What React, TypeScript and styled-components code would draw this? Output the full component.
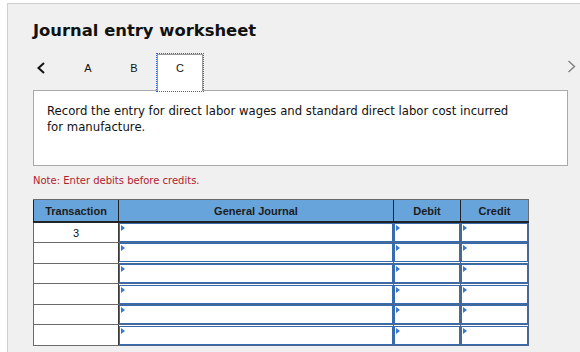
import React from 'react';
import styled, { createGlobalStyle } from 'styled-components';

const GlobalStyle = createGlobalStyle`
  html, body {
    margin: 0;
    padding: 0;
    background: #ffffff;
  }
  body {
    font-family: "DejaVu Sans", Verdana, sans-serif;
    overflow: hidden;
  }
`;

const Frame = styled.div`
  margin: 3px 0 0 7px;
  width: 573px;
  height: 349px;
  box-sizing: border-box;
  background: #f0f0f0;
  border-top: 1px solid #cfcfcf;
  border-left: 1px solid #cfcfcf;
  padding: 17px 0 0 25px;
  overflow: hidden;
`;

const Title = styled.h1`
  margin: 0;
  font-size: 16.4px;
  line-height: 20px;
  font-weight: bold;
  color: #111111;
`;

const TabRow = styled.div`
  display: flex;
  align-items: flex-start;
  width: 543px;
  height: 37px;
  margin-top: 13px;
  position: relative;
  z-index: 1;
  margin-bottom: -1px;
`;

const NavButton = styled.div<{ side: 'left' | 'right' }>`
  display: flex;
  width: ${p => (p.side === 'left' ? '32px' : 'auto')};
  margin-left: ${p => (p.side === 'right' ? 'auto' : '0')};
  padding-top: ${p => (p.side === 'left' ? '8px' : '6px')};
  padding-left: ${p => (p.side === 'left' ? '3px' : '0')};
  box-sizing: border-box;
`;

const Tab = styled.div<{ active?: boolean }>`
  width: 46px;
  height: 37px;
  box-sizing: border-box;
  text-align: center;
  font-family: "Liberation Sans", Arial, sans-serif;
  font-size: 11px;
  line-height: 13px;
  padding-top: 7px;
  color: #111111;
  background: ${p => (p.active ? '#ffffff' : 'transparent')};
  border: 1px solid ${p => (p.active ? '#9a9a9a' : 'transparent')};
  border-bottom: none;
  outline: ${p => (p.active ? '1px dotted #2a62c8' : 'none')};
`;

const Prompt = styled.div`
  width: 535px;
  height: 76px;
  box-sizing: border-box;
  background: #ffffff;
  border: 1px solid #a9a9a9;
  padding: 12px 40px 0 13px;
  font-size: 11.7px;
  line-height: 16px;
  color: #111111;
`;

const Note = styled.div`
  margin-top: 8px;
  font-size: 10px;
  line-height: 14px;
  color: #b3222c;
`;

const Table = styled.table`
  margin-top: 11px;
  border-collapse: collapse;
  width: 495px;
  table-layout: fixed;
  background: #ffffff;
  font-family: "Liberation Sans", Arial, sans-serif;
  font-size: 11px;
  border: 1px solid #6a6a6a;
`;

const HeadCell = styled.th<{ w: number }>`
  width: ${p => p.w}px;
  height: 21px;
  padding: 0;
  background: #68a4dc;
  color: #1c1c1c;
  font-weight: bold;
  text-align: center;
  border-left: 1px solid #222222;
  border-bottom: 2px solid #222222;
  border-top: 1px solid #6a6a6a;
`;

const Row = styled.tr`
  height: 20.6px;
`;

const TxCell = styled.td`
  padding: 0;
  text-align: center;
  color: #111111;
  border: 1px solid #6a6a6a;
  border-right: 1px solid #3a3a3a;
`;

const EntryCell = styled.td`
  padding: 0;
  border: 1px solid #4a6790;
`;

const Entry = styled.div`
  position: relative;
  height: 17px;
  border: 1px solid #386cb2;
  background: #ffffff;

  &::before {
    content: '';
    position: absolute;
    left: 1px;
    top: 1px;
    border-top: 3px solid transparent;
    border-bottom: 3px solid transparent;
    border-left: 4px solid #3a78c8;
  }
`;

const rows = ['3', '', '', '', '', ''];

export default function App() {
  return (
    <>
      <GlobalStyle />
      <Frame>
        <Title>Journal entry worksheet</Title>
        <TabRow>
          <NavButton side="left">
            <svg width="10" height="12" viewBox="0 0 10 12">
              <polyline points="8,1 2.5,6 8,11" fill="none" stroke="#111" strokeWidth="2" />
            </svg>
          </NavButton>
          <Tab>A</Tab>
          <Tab>B</Tab>
          <Tab active>C</Tab>
          <NavButton side="right">
            <svg width="9" height="13" viewBox="0 0 9 13">
              <polyline points="1.5,1 7.5,6.5 1.5,12" fill="none" stroke="#808080" strokeWidth="1.4" />
            </svg>
          </NavButton>
        </TabRow>
        <Prompt>
          Record the entry for direct labor wages and standard direct labor cost incurred
          for manufacture.
        </Prompt>
        <Note>Note: Enter debits before credits.</Note>
        <Table>
          <thead>
            <tr>
              <HeadCell w={84}>Transaction</HeadCell>
              <HeadCell w={274}>General Journal</HeadCell>
              <HeadCell w={66}>Debit</HeadCell>
              <HeadCell w={67}>Credit</HeadCell>
            </tr>
          </thead>
          <tbody>
            {rows.map((tx, i) => (
              <Row key={i}>
                <TxCell>{tx}</TxCell>
                <EntryCell><Entry /></EntryCell>
                <EntryCell><Entry /></EntryCell>
                <EntryCell><Entry /></EntryCell>
              </Row>
            ))}
          </tbody>
        </Table>
      </Frame>
    </>
  );
}
